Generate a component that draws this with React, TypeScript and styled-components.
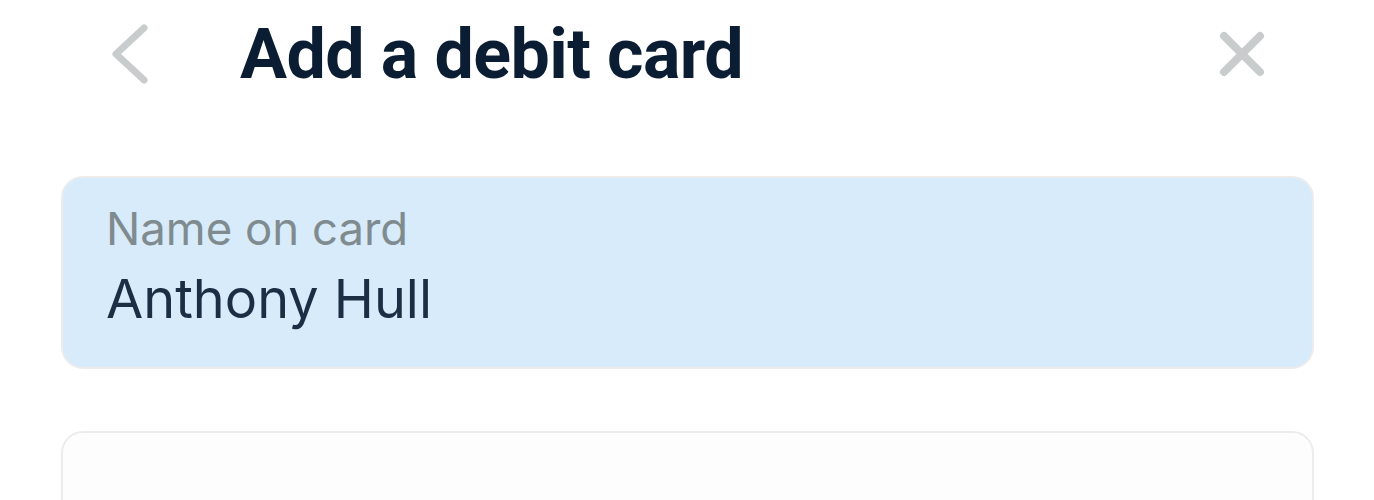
import styled, { createGlobalStyle } from 'styled-components';

const Global = createGlobalStyle`
  html, body {
    margin: 0;
    padding: 0;
    background: #ffffff;
  }
  * {
    box-sizing: border-box;
  }
`;

const Sheet = styled.div`
  width: 1374px;
  height: 500px;
  overflow: hidden;
  background: #fff;
  font-family: Inter, 'Noto Sans', sans-serif;
`;

const Header = styled.header`
  display: flex;
  align-items: center;
  height: 108px;
  padding: 0 108px 0 108px;
`;

const IconButton = styled.button`
  display: flex;
  align-items: center;
  justify-content: center;
  padding: 0;
  border: 0;
  background: none;
  color: #c9cccd;
  cursor: pointer;
`;

const Title = styled.h1`
  margin: 0 0 0 90px;
  flex: 1;
  font-family: Roboto, 'Noto Sans', sans-serif;
  font-size: 70px;
  font-weight: 700;
  letter-spacing: -0.6px;
  line-height: 1;
  color: #0b1d33;
`;

const Form = styled.div`
  display: flex;
  flex-direction: column;
  gap: 62px;
  padding: 68px 60px 0 61px;
`;

const Field = styled.label<{ $filled?: boolean }>`
  display: flex;
  flex-direction: column;
  gap: 10px;
  height: 193px;
  padding: 24px 43px 0;
  border: 2px solid #ececec;
  border-radius: 22px;
  background: ${({ $filled }) => ($filled ? '#d8ebfb' : '#fdfdfd')};
`;

const Label = styled.span`
  font-size: 45.5px;
  line-height: 1.2;
  color: #808b90;
`;

const Value = styled.span`
  font-size: 54px;
  line-height: 1.2;
  color: #1c2e44;
`;

function BackIcon() {
  return (
    <svg width="42" height="62" viewBox="0 0 42 62" fill="none">
      <path d="M36 5 L8 31 L36 57" stroke="currentColor" strokeWidth="7" strokeLinecap="round" strokeLinejoin="round" />
    </svg>
  );
}

function CloseIcon() {
  return (
    <svg width="48" height="48" viewBox="0 0 48 48" fill="none">
      <path d="M6 6 L42 42 M42 6 L6 42" stroke="currentColor" strokeWidth="8" strokeLinecap="round" />
    </svg>
  );
}

export default function App() {
  return (
    <Sheet>
      <Global />
      <Header>
        <IconButton aria-label="Back">
          <BackIcon />
        </IconButton>
        <Title>Add a debit card</Title>
        <IconButton aria-label="Close">
          <CloseIcon />
        </IconButton>
      </Header>
      <Form>
        <Field $filled>
          <Label>Name on card</Label>
          <Value>Anthony Hull</Value>
        </Field>
        <Field />
      </Form>
    </Sheet>
  );
}
